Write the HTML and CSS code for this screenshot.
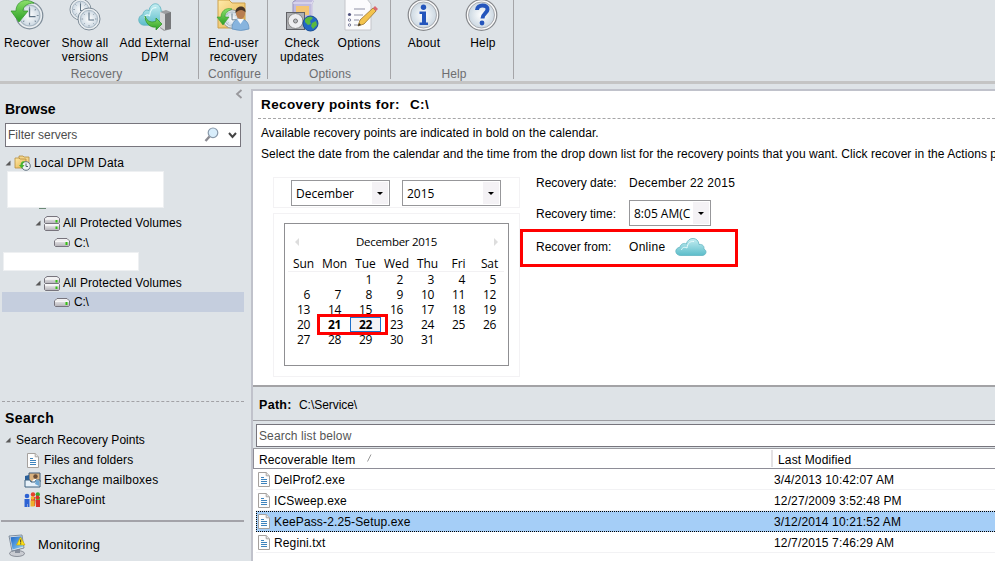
FILE: index.html
```html
<!DOCTYPE html>
<html lang="en">
<head>
<meta charset="utf-8">
<title>Recovery</title>
<link rel="stylesheet" href="styles.css">
</head>
<body>
<svg class="defs" width="0" height="0">
  <defs>
    <linearGradient id="gCloud" x1="0" y1="0" x2="0" y2="1"><stop offset="0" stop-color="#c5eef2"/><stop offset="1" stop-color="#5cbdca"/></linearGradient>
    <linearGradient id="gFolder" x1="0" y1="0" x2="1" y2="1"><stop offset="0" stop-color="#ffeaa8"/><stop offset="1" stop-color="#e3ae48"/></linearGradient>
    <linearGradient id="gMetal" x1="0" y1="0" x2="0" y2="1"><stop offset="0" stop-color="#fafafa"/><stop offset="1" stop-color="#b4b2b8"/></linearGradient>
    <linearGradient id="gArrow" x1="0" y1="0" x2="0" y2="1"><stop offset="0" stop-color="#8be06a"/><stop offset="1" stop-color="#2c9f25"/></linearGradient>
    <linearGradient id="gScreen" x1="0" y1="0" x2="1" y2="1"><stop offset="0" stop-color="#1d63c4"/><stop offset="1" stop-color="#8fd6f7"/></linearGradient>
    <radialGradient id="gFace"><stop offset="0" stop-color="#ffffff"/><stop offset="1" stop-color="#ccd8e2"/></radialGradient>
    <symbol id="clock" viewBox="0 0 24 24">
      <circle cx="12" cy="12" r="11" fill="#e9edf0" stroke="#7e8c98" stroke-width="1"/>
      <circle cx="12" cy="12" r="8.6" fill="url(#gFace)" stroke="#a9b8c4" stroke-width="1"/>
      <path d="M12 4.5v1.6M12 18v1.6M4.5 12h1.6M18 12h1.6M6.7 6.7l1 1M17.3 6.7l-1 1M6.7 17.3l1-1M17.3 17.3l-1-1" stroke="#8393a1" stroke-width=".9"/>
      <path d="M12 6v7h5" fill="none" stroke="#5f7486" stroke-width="1.1"/>
    </symbol>
    <symbol id="page" viewBox="0 0 12 15">
      <path d="M.5.5h7.7l3.300 3.300v10.700H.5z" fill="#fdfdfd" stroke="#a5a19e"/>
      <path d="M8.200.5v3.300h3.300" fill="#e5e5e5" stroke="#aaa6a3"/>
      <path d="M3 5.500h3M3 7.500h6M3 9.500h6M3 11.500h6" stroke="#3d83bd"/>
    </symbol>
    <symbol id="drive" viewBox="0 0 16 9">
      <path d="M3 .5h10l2.500 2.500v4.500l-1 1h-13l-1-1V3z" fill="url(#gMetal)" stroke="#77747d"/>
      <path d="M1 3.200h14" stroke="#fff"/>
      <rect x="11.500" y="4" width="2" height="3" fill="#35c313"/>
    </symbol>
    <symbol id="drives" viewBox="0 0 16 15">
      <path d="M3 .5h10l2.500 2v4l-1 1h-13l-1-1v-4z" fill="url(#gMetal)" stroke="#77747d"/>
      <path d="M1.500 7.500h13l1 1v5l-1 1h-13l-1-1v-5z" fill="url(#gMetal)" stroke="#77747d"/>
      <path d="M1 3h14M1 9h14" stroke="#fff"/>
      <path d="M12.500 4v2.500M12.500 10.500v2.500" stroke="#35c313" stroke-width="2"/>
    </symbol>
    <symbol id="twisty" viewBox="0 0 6 6"><path d="M5.500.5v5h-5z" fill="#595959"/></symbol>
    <symbol id="cloud" viewBox="0 0 32 20" preserveAspectRatio="none">
      <path d="M6 18.500C-.5 18.500-1 11 5 10.200 5.500 7 9 5.500 11.300 7 13-.500 23.500-.500 24 7.500c4-.6 5.500 2.300 4.800 4.500 3.700 1.500 2.500 6.500-1.800 6.500z" fill="url(#gCloud)" stroke="#63b5c2" stroke-width=".8"/>
      <path d="M6.500 13c.5-2.500 3-3.500 5.500-2 .5-5 3.500-7 7-6.500" fill="none" stroke="#e8fbfc" stroke-width="1"/>
    </symbol>
  </defs>
</svg>

<div class="app">
  <header class="ribbon">
    <section class="group g-recovery">
      <div class="tools">
        <div class="tool t-recover">
          <svg width="34" height="34" viewBox="0 0 34 34"><use href="#clock" x="5" y="2" width="29" height="29"/><path d="M24 4C15-2 6 3 6 12H1l8 11 9-11h-5c0-5 5-8 11-8z" fill="url(#gArrow)" stroke="#379a2e" stroke-width=".8"/></svg>
          <span>Recover</span>
        </div>
        <div class="tool t-versions">
          <svg width="34" height="34" viewBox="0 0 34 34"><use href="#clock" x="1" y="-1" width="23" height="23"/><use href="#clock" x="9" y="8" width="24" height="24"/></svg>
          <span>Show all<br>versions</span>
        </div>
        <div class="tool t-dpm">
          <svg width="34" height="34" viewBox="0 0 34 34"><use href="#cloud" x="0" y="3" width="31" height="25"/><path d="M22 13l6-2 5 2v17l-7 2-4-3z" fill="#9c9da0"/><path d="M22 13l5 2v16l-5-3z" fill="#d6d7d9"/><path d="M27 15l6-2v17l-6 1z" fill="#77787b"/><path d="M7 17c2 6 7 7 11 5v-3l6 6-6 6v-3c-6 1-11-4-11-11z" fill="url(#gArrow)" stroke="#288e22" stroke-width=".7"/></svg>
          <span>Add External<br>DPM</span>
        </div>
      </div>
      <h6>Recovery</h6>
    </section>
    <section class="group g-configure">
      <div class="tools">
        <div class="tool t-enduser">
          <svg width="34" height="34" viewBox="0 0 34 34"><path d="M2 1h11l3 3h13v25H2z" fill="url(#gFolder)" stroke="#cda14d"/><use href="#clock" x="6" y="10" width="20" height="20"/><path d="M16 10C9 8 5 13 5 18H1l6 8 6-8H9c0-4 3-6 7-8z" fill="url(#gArrow)" stroke="#379a2e" stroke-width=".6"/><path d="M16 30c0-8 4-10 8-10s9 2 9 10q-8 3-17 0z" fill="#87b4de" stroke="#5f8db9" stroke-width=".7"/><path d="M21 20l3.500 5 3.500-5z" fill="#f4f8fb"/><ellipse cx="24.500" cy="14" rx="4.600" ry="6" fill="#b87e51"/><path d="M19.500 14c-1-8 11-9 10-.5-2-3-6-4-10 .5z" fill="#443429"/></svg>
          <span>End-user<br>recovery</span>
        </div>
      </div>
      <h6>Configure</h6>
    </section>
    <section class="group g-options">
      <div class="tools">
        <div class="tool t-check">
          <svg width="34" height="34" viewBox="0 0 34 34"><path d="M8 3l4-3h17l-2 5v19H8z" fill="#c0bbdf" stroke="#9690ba"/><path d="M8 4h19l2-4M27 4v18" fill="none" stroke="#ece9f8"/><rect x="11" y="7" width="13" height="9" fill="#f4c675"/><rect x="1.500" y="13.500" width="18" height="17" fill="#aeb0b4" stroke="#606166"/><circle cx="10.500" cy="22" r="7.500" fill="#eeeef0" stroke="#888"/><circle cx="10.500" cy="22" r="2" fill="#b7b9be" stroke="#777"/><circle cx="25.500" cy="24.500" r="7.500" fill="#2267c5" stroke="#174c93"/><path d="M20 20q5-4 8-1l-3 3 1 3-3 1-3-3zM27 24l4-2 1 4-4 4-2-3z" fill="#5ab93e"/></svg>
          <span>Check<br>updates</span>
        </div>
        <div class="tool t-options">
          <svg width="34" height="34" viewBox="0 0 34 34"><path d="M3 0h22l4 5v26H3z" fill="#fbfbfd" stroke="#c4c5ca"/><path d="M12 10h11M12 16h9M12 21h5M12 26h6" stroke="#8f92a5" stroke-width="1.200"/><circle cx="7.500" cy="15.500" r="1.600" fill="#50537e"/><circle cx="7.500" cy="21" r="1.200" fill="#fff" stroke="#777a98"/><circle cx="7.500" cy="26" r="1.200" fill="#fff" stroke="#777a98"/><path d="M16 27l2-6L31 9l3 3-12 13z" fill="#f3c34d" stroke="#9a742e" stroke-width=".8"/><path d="M31 9l2-2 3 3-2 2z" fill="#db6872"/><path d="M16 27l1-3 2 2z" fill="#333"/></svg>
          <span>Options</span>
        </div>
      </div>
      <h6>Options</h6>
    </section>
    <section class="group g-help">
      <div class="tools">
        <div class="tool t-about">
          <svg width="34" height="34" viewBox="0 0 34 34"><circle cx="16.500" cy="16" r="15.300" fill="#fafafa" stroke="#86888c" stroke-width="1.200"/><circle cx="16.500" cy="16" r="13" fill="url(#gFace)" stroke="#aaadb2"/><circle cx="16.500" cy="8.300" r="2.700" fill="#2455bc"/><path d="M12.500 12.500H19v11h2v2.500h-8.500v-2.500H15V15h-2.500z" fill="#2455bc"/></svg>
          <span>About</span>
        </div>
        <div class="tool t-help">
          <svg width="34" height="34" viewBox="0 0 34 34"><circle cx="15.500" cy="16" r="15.300" fill="#fafafa" stroke="#86888c" stroke-width="1.200"/><circle cx="15.500" cy="16" r="13" fill="url(#gFace)" stroke="#aaadb2"/><path d="M11 11c0-6 11-6 10.500-.5-.3 4-5 4-5 9" fill="none" stroke="#2455bc" stroke-width="4"/><circle cx="16" cy="24" r="2.400" fill="#2455bc"/></svg>
          <span>Help</span>
        </div>
      </div>
      <h6>Help</h6>
    </section>
  </header>

  <div class="body">
    <aside class="side">
      <div class="collapse"><svg width="8" height="10" viewBox="0 0 8 10"><path d="M6.500 1L2 5l4.500 4" fill="none" stroke="#98989c" stroke-width="1.800"/></svg></div>
      <h2>Browse</h2>
      <div class="filter">
        <span>Filter servers</span>
        <svg width="15" height="16" viewBox="0 0 15 16"><circle cx="8" cy="5.800" r="4.800" fill="#d8edfb" stroke="#8999aa" stroke-width="1.200"/><path d="M4.500 9.500L.5 14" stroke="#8b8b92" stroke-width="2.400"/></svg>
        <svg class="chev" width="9" height="7" viewBox="0 0 9 7"><path d="M1 1l3.500 4L8 1" fill="none" stroke="#444" stroke-width="2"/></svg>
      </div>
      <div class="tree">
        <div class="node root"><svg width="6" height="6"><use href="#twisty"/></svg><svg class="ico" width="17" height="16" viewBox="0 0 17 16"><path d="M5 1h4l1 1h5v9H5z" fill="#f3d58b" stroke="#b58d3e" stroke-width=".8"/><path d="M1 3h4l1 1h6v9H1z" fill="url(#gFolder)" stroke="#b58d3e" stroke-width=".8"/><circle cx="12" cy="11" r="4.300" fill="#eef2f4" stroke="#647482"/><path d="M12 8.500v3h2" fill="none" stroke="#52606c"/><path d="M11 6.500C8 5.500 6.500 8 6.500 10H5l2.800 3.500L10.500 10H8.500c0-1.500 1-2.500 2.500-3.500z" fill="#48b62f"/></svg><span>Local DPM Data</span></div>
        <div class="mask mask-a"></div>
        <div class="sliver"></div>
        <div class="node vols"><svg width="6" height="6"><use href="#twisty"/></svg><svg class="ico" width="16" height="15"><use href="#drives"/></svg><span>All Protected Volumes</span></div>
        <div class="node vol"><svg width="16" height="9"><use href="#drive"/></svg><span>C:\</span></div>
        <div class="mask mask-b"></div>
        <div class="node vols"><svg width="6" height="6"><use href="#twisty"/></svg><svg class="ico" width="16" height="15"><use href="#drives"/></svg><span>All Protected Volumes</span></div>
        <div class="node vol sel"><svg width="16" height="9"><use href="#drive"/></svg><span>C:\</span></div>
      </div>
      <div class="dash"></div>
      <h2 class="h-search">Search</h2>
      <div class="node s-root"><svg width="6" height="6"><use href="#twisty"/></svg><span>Search Recovery Points</span></div>
      <div class="node s-item"><i><svg width="12" height="15"><use href="#page"/></svg></i><span class="w-files">Files and folders</span></div>
      <div class="node s-item"><i><svg width="17" height="16" viewBox="0 0 17 16"><path d="M5 1h11v9H5z" fill="#d9b17e" stroke="#425d79"/><path d="M8 10c0-4 7-4 7 0z" fill="#fff"/><circle cx="11.500" cy="4.500" r="2.200" fill="#684d38"/><path d="M1 4l4-1v9H1z" fill="#2a5f99"/><path d="M1 8h5l1 2h4l1-2h4v7H1z" fill="#e8f2fa" stroke="#3d617f"/><path d="M12 8l3 1v5l-4-2z" fill="#6fa9d5"/></svg></i><span class="w-exch">Exchange mailboxes</span></div>
      <div class="node s-item"><i><svg width="17" height="16" viewBox="0 0 17 16"><circle cx="9" cy="2.500" r="2.200" fill="#e5402c"/><path d="M7 5h4v9H7z" fill="#e5402c"/><circle cx="13.800" cy="2.500" r="2.200" fill="#3aa830"/><path d="M11.500 5h4.500v8h-4z" fill="#55bd36"/><circle cx="3" cy="4" r="2.300" fill="#2d62d3"/><path d="M.5 7h5v8h-2v-3H3v3H.5z" fill="#2d62d3"/><circle cx="8.500" cy="6" r="1.800" fill="#f0b52b"/><path d="M6.500 8.500h4v6h-4z" fill="#ecb02c"/><circle cx="13.500" cy="5.500" r="2" fill="#df2f28"/><path d="M11.500 8h4.500v7h-4z" fill="#d82f2a"/></svg></i><span class="w-share">SharePoint</span></div>
      <div class="rule"></div>
      <div class="monitor">
        <svg width="18" height="23" viewBox="0 0 18 23"><ellipse cx="9" cy="19.500" rx="7.500" ry="3" fill="#c9ccd2" stroke="#6a707b" stroke-width=".7"/><path d="M7 14h5v5H7z" fill="#878e9b"/><path d="M1 2l13-1 2 13-12 3z" fill="#dfe4ea" stroke="#68788c" stroke-width=".8"/><path d="M2.500 3.200l11-1 1.500 10.500L4.500 15.500z" fill="url(#gScreen)"/><path d="M12.500 3l4.500 8H8.500z" fill="#ffe319" stroke="#c4a100" stroke-width=".6"/><path d="M12.700 5.500v3M12.700 9.300v1" stroke="#333"/></svg>
        <span>Monitoring</span>
      </div>
    </aside>

    <main class="main">
      <section class="points">
        <h1>Recovery points for:<b>C:\</b></h1>
        <p class="p1">Available recovery points are indicated in bold on the calendar.</p>
        <p class="p2">Select the date from the calendar and the time from the drop down list for the recovery points that you want. Click recover in the Actions pane.</p>
        <div class="picker">
          <div class="left">
            <div class="panel selects">
              <div class="select"><span>December</span><i></i></div>
              <div class="select"><span class="w-year">2015</span><i></i></div>
            </div>
            <div class="panel calwrap">
              <div class="cal">
                <div class="calhead"><i class="prev"></i><span>December 2015</span><i class="next"></i></div>
                <div class="week names"><span>Sun</span><span>Mon</span><span>Tue</span><span>Wed</span><span>Thu</span><span>Fri</span><span>Sat</span></div>
                <div class="week"><span></span><span></span><span>1</span><span>2</span><span>3</span><span>4</span><span>5</span></div>
                <div class="week"><span>6</span><span>7</span><span>8</span><span>9</span><span>10</span><span>11</span><span>12</span></div>
                <div class="week"><span>13</span><span>14</span><span>15</span><span>16</span><span>17</span><span>18</span><span>19</span></div>
                <div class="week"><span>20</span><span class="bold">21</span><span class="bold today">22</span><span>23</span><span>24</span><span>25</span><span>26</span><div class="mark"></div></div>
                <div class="week"><span>27</span><span>28</span><span>29</span><span>30</span><span>31</span><span></span><span></span></div>
              </div>
            </div>
          </div>
          <div class="info">
            <div class="row r1"><span>Recovery date:</span><span class="w-date">December 22 2015</span></div>
            <div class="row r2"><span>Recovery time:</span><div class="select time"><span>8:05 AM(C</span><i></i></div></div>
            <div class="row r3"><span>Recover from:</span><span class="w-online">Online</span><svg width="32" height="20"><use href="#cloud"/></svg></div>
          </div>
        </div>
      </section>
      <section class="items">
        <div class="path"><b>Path:</b><span>C:\Service\</span></div>
        <div class="searchwrap"><div class="search">Search list below</div></div>
        <div class="thead"><span class="c1">Recoverable Item<svg width="5" height="8" viewBox="0 0 5 8"><path d="M.5 7.500l3.500-7" stroke="#999" fill="none"/></svg></span><span class="c2">Last Modified</span></div>
        <div class="tr"><svg width="12" height="15"><use href="#page"/></svg><span class="name">DelProf2.exe</span><span class="date">3/4/2013 10:42:07 AM</span></div>
        <div class="tr"><svg width="12" height="15"><use href="#page"/></svg><span class="name">ICSweep.exe</span><span class="date">12/27/2009 3:52:48 PM</span></div>
        <div class="tr on"><svg width="12" height="15"><use href="#page"/></svg><span class="name">KeePass-2.25-Setup.exe</span><span class="date">3/12/2014 10:21:52 AM</span></div>
        <div class="tr"><svg width="12" height="15"><use href="#page"/></svg><span class="name">Regini.txt</span><span class="date">12/7/2015 7:46:29 AM</span></div>
      </section>
    </main>
  </div>
</div>
</body>
</html>
```
FILE: styles.css
```css
* { box-sizing: border-box; }
body { margin: 0; background: #dee3e7; color: #000; font: 12px/14px "Liberation Sans", Arial, sans-serif; overflow: hidden; }
h1, h2, h6, p { margin: 0; }
svg { display: block; flex: none; overflow: visible; }
i { font-style: normal; }
.defs { position: absolute; }
.app { width: 995px; height: 561px; display: flex; flex-direction: column; overflow: hidden; }

.ribbon { height: 84px; flex: none; display: flex; border-bottom: 3px solid #c4c4c4; }
.group { height: 79px; border-right: 1px solid #a5a5a8; display: flex; flex-direction: column; }
.g-recovery { width: 199px; }
.g-configure { width: 69px; }
.g-options { width: 123px; }
.g-help { width: 123px; }
.tools { display: flex; height: 67px; flex: none; }
.tool { display: flex; flex-direction: column; align-items: center; text-align: center; white-space: nowrap; letter-spacing: .2px; }
.tool svg { margin-top: -1px; margin-bottom: 3px; }
.t-recover { width: 54px; }
.t-versions { width: 62px; }
.t-dpm { width: 78px; }
.t-enduser { width: 71px; }
.t-check { width: 68px; }
.t-options { width: 46px; }
.t-about { width: 66px; }
.t-help { width: 52px; }
.t-enduser span { padding-left: 1px; }
.group h6 { font: 12px/14px "Liberation Sans", Arial, sans-serif; color: #6e6e70; text-align: center; letter-spacing: .1px; }
.g-recovery h6 { padding-right: 5px; }
.g-configure h6 { padding-left: 3px; }
.g-options h6 { padding-left: 2px; }
.g-help h6 { padding-left: 4px; }

.body { flex: 1; display: flex; min-height: 0; }
.side { width: 251px; flex: none; }
.collapse { height: 15px; padding: 5px 0 0 235px; }
h2 { font-size: 14px; line-height: 20px; padding-left: 5px; }
.filter { margin: 4px 0 0 5px; width: 236px; height: 24px; background: #fff; border: 1px solid #77757d; display: flex; align-items: center; color: #4d4d4d; padding-left: 2px; }
.filter span { width: 197px; }
.filter .chev { margin-left: 8px; }
.node { display: flex; align-items: center; height: 20px; white-space: nowrap; letter-spacing: .07px; }
.node.root { height: 24px; padding: 7px 0 0 5px; letter-spacing: .2px; }
.root .ico { margin: 0 3px; }
.mask { background: #fff; border: 1px solid #eef0f2; }
.mask-a { width: 157px; height: 37px; margin-left: 7px; }
.mask-b { width: 136px; height: 19px; margin-left: 3px; }
.sliver { width: 7px; height: 1px; margin: 0 0 4px 39px; background: #6d8a78; }
.vols { padding-left: 35px; }
.vols .ico { margin: 0 3px; }
.vol { height: 19px; padding-left: 52px; margin-left: 2px; }
.vol span { margin-left: 4px; letter-spacing: -.2px; }
.mask-b + .vols { margin-top: 2px; }
.vol.sel { width: 242px; height: 20px; margin-top: -1px; background: #c5cede; }
.dash { margin: 89px 0 0 2px; width: 242px; border-top: 1px dashed #a2a2a6; }
.h-search { margin-top: 5px; margin-bottom: 1px; line-height: 22px; letter-spacing: .4px; }
.s-root { padding-left: 5px; letter-spacing: 0; }
.s-root span { margin-left: 5px; }
.s-item i { width: 17px; margin-left: 24px; display: flex; justify-content: center; }
.s-item span { margin-left: 3px; }
.w-exch, .w-share { letter-spacing: .2px; }
.rule { height: 2px; width: 243px; margin: 10px 0 0 1px; background: #a3a3a9; }
.monitor { display: flex; align-items: center; height: 46px; padding-left: 8px; font-size: 13px; letter-spacing: .15px; }
.monitor span { margin-left: 12px; }

.main { width: 744px; margin-top: 5px; border: solid #c0c2cb; border-width: 2px 0 0 2px; background: #fff; flex: none; }
.points { height: 294px; padding-left: 5px; overflow: hidden; }
.points h1 { font-size: 13.5px; line-height: 27px; height: 28px; padding-left: 3px; border-bottom: 1px dashed #a6a6a8; letter-spacing: .38px; }
.points h1 b { margin-left: 10px; }
.points p { padding-left: 3px; white-space: nowrap; line-height: 14px; }
.p1 { margin-top: 7px; letter-spacing: .08px; }
.p2 { margin-top: 7px; letter-spacing: .055px; }
.picker { display: flex; margin: 16px 0 0 15px; }
.left { width: 247px; }
.panel { border: 1px solid #f3f2f4; }
.selects { height: 31px; padding: 2px 0 0 17px; display: flex; gap: 12px; }
.select { width: 99px; height: 26px; border: 1px solid #97979a; background: #fff; padding: 1px; display: flex; align-items: center; white-space: nowrap; font-family: "Open Sans", sans-serif; font-size: 12px; }
.select span { flex: 1; padding: 2px 0 0 3px; line-height: 18px; overflow: hidden; }
.select i { width: 16px; height: 22px; background: #f4f2f5; display: flex; align-items: center; justify-content: center; }
.select i::before { content: ""; border: 3px solid transparent; border-top-color: #000; border-bottom: 0; }
.calwrap { height: 164px; margin-top: 5px; padding: 9px 0 0 10px; }
.cal { width: 225px; height: 143px; border: 1px solid #8f8f92; padding: 10px 4px 0 3px; font: 12px/15px "Open Sans", sans-serif; }
.calhead { display: flex; align-items: center; justify-content: space-between; padding: 0 6px 0 7px; height: 15px; font-size: 11.5px; letter-spacing: -.3px; }
.prev, .next { border: 4px solid transparent; }
.prev { border-right-color: #ddd; border-left: 0; }
.next { border-left-color: #ddd; border-right: 0; }
.week { display: grid; grid-template-columns: repeat(7, 31px); height: 15px; position: relative; }
.week span { text-align: right; padding-right: 9px; letter-spacing: -.4px; }
.names { height: 17px; margin-top: 6px; padding-top: 1px; border-bottom: 1px solid #f2f1f3; }
.names span { text-align: center; padding: 0; letter-spacing: -.1px; }
.week .bold { font-weight: 700; }
.week .today { border: 1px solid #1f6fc9; background: #f4f2f5; line-height: 13px; padding-right: 8px; }
.mark { position: absolute; left: 29px; top: -3px; width: 71px; height: 21px; border: 3px solid #f00; }

.row { display: flex; align-items: center; white-space: nowrap; height: 26px; padding-left: 16px; }
.row > span:first-child { width: 93px; }
.r1 { height: 12px; }
.r2 { height: 26px; margin-top: 11px; }
.r2 > span { padding-top: 2px; }
.w-date { letter-spacing: .25px; }
.w-online { letter-spacing: .3px; }
.time { width: 82px; }
.r3 { height: 38px; width: 218px; margin-top: 3px; border: 3px solid #f00; padding-left: 13px; }
.r3 span { padding-bottom: 2px; }
.r3 svg { margin: 0 0 2px 9px; }

.items { border-top: 2px solid #a3a3a6; }
.path { height: 33px; background: #dee3e7; display: flex; align-items: center; padding: 2px 0 0 6px; }
.path b { font-size: 12.5px; width: 40px; letter-spacing: .3px; }
.path span { letter-spacing: -.05px; }
.searchwrap { height: 29px; background: #dee3e7; border-top: 1px solid #9c9ca1; border-bottom: 1px solid #9c9ca1; padding: 3px 0 0 3px; }
.search { height: 23px; background: #fff; border: 1px solid #77757d; border-right: 0; color: #555; line-height: 22px; padding-left: 2px; letter-spacing: .1px; }
.thead { height: 20px; border: solid #8e8d97; border-width: 0 0 1px 1px; display: flex; align-items: center; letter-spacing: .14px; }
.c1 { width: 517px; padding: 2px 0 0 5px; display: flex; align-items: center; }
.c1 svg { margin-left: 12px; margin-top: -4px; }
.c2 { border-left: 2px solid #e3e1e4; padding: 3px 0 0 5px; line-height: 14px; }
.tr { height: 21px; margin-left: 3px; padding-left: 2px; border-bottom: 1px solid #f2f2f4; display: flex; align-items: center; white-space: nowrap; letter-spacing: .14px; }
.tr span { padding-top: 2px; }
.tr .name { width: 500px; margin-left: 4px; }
.tr.on { background: #a5cef7; border: 1px dotted #000; border-right: 0; padding-left: 1px; }
.tr.on span { padding-top: 1px; }
```
